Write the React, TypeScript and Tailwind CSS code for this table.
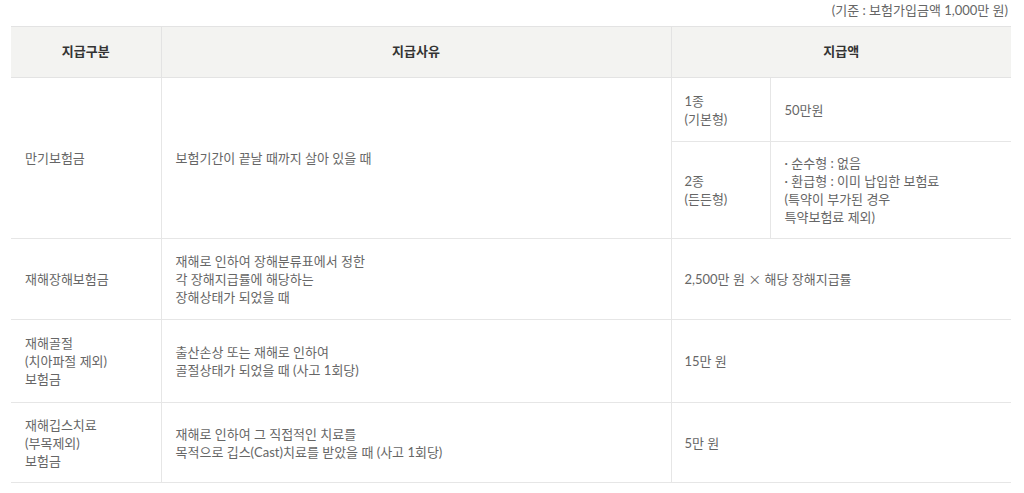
import React from "react";

const font = { fontFamily: "Lato, 'Noto Sans CJK KR', sans-serif" };

export default function App() {
  const td = "border-b border-[#e6e6e6] align-middle text-[13px] leading-[18px] text-[#666]";
  return (
    <div className="min-h-screen bg-white" style={font}>
      <div className="ml-[11px] w-[1000px]">
        <p className="h-[26px] pr-[3px] pt-[1px] text-right text-[13px] leading-[18px] text-[#666]">
          (기준 : 보험가입금액 1,000만 원)
        </p>
        <table className="w-[1000px] table-fixed border-collapse">
          <colgroup>
            <col className="w-[150px]" />
            <col className="w-[510px]" />
            <col className="w-[99px]" />
            <col className="w-[241px]" />
          </colgroup>
          <thead>
            <tr className="h-[51px] bg-[#f3f3f1]">
              <th className="border-t border-b border-[#e3e3e3] text-[13px] font-bold text-[#333]">지급구분</th>
              <th className="border-t border-b border-l border-[#e3e3e3] text-[13px] font-bold text-[#333]">지급사유</th>
              <th colSpan={2} className="border-t border-b border-l border-[#e3e3e3] text-[13px] font-bold text-[#333]">지급액</th>
            </tr>
          </thead>
          <tbody>
            <tr className="h-[64px]">
              <td rowSpan={2} className={`${td} pl-[14px]`}>만기보험금</td>
              <td rowSpan={2} className={`${td} border-l pl-[14px]`}>보험기간이 끝날 때까지 살아 있을 때</td>
              <td className={`${td} border-l pl-[13px]`}>1종<br />(기본형)</td>
              <td className={`${td} border-l pl-[14px]`}>50만원</td>
            </tr>
            <tr className="h-[97px]">
              <td className={`${td} border-l pl-[13px]`}>2종<br />(든든형)</td>
              <td className={`${td} border-l pl-[14px]`}>
                · 순수형 : 없음<br />
                · 환급형 : 이미 납입한 보험료<br />
                (특약이 부가된 경우<br />
                특약보험료 제외)
              </td>
            </tr>
            <tr className="h-[81px]">
              <td className={`${td} pl-[14px]`}>재해장해보험금</td>
              <td className={`${td} border-l pl-[14px]`}>
                재해로 인하여 장해분류표에서 정한<br />
                각 장해지급률에 해당하는<br />
                장해상태가 되었을 때
              </td>
              <td colSpan={2} className={`${td} border-l pl-[13px]`}>
                2,500만 원 <span className="font-['Noto_Sans_CJK_KR']">×</span> 해당 장해지급률
              </td>
            </tr>
            <tr className="h-[83px]">
              <td className={`${td} pl-[14px]`}>재해골절<br />(치아파절 제외)<br />보험금</td>
              <td className={`${td} border-l pl-[14px]`}>
                출산손상 또는 재해로 인하여<br />
                골절상태가 되었을 때 (사고 1회당)
              </td>
              <td colSpan={2} className={`${td} border-l pl-[13px]`}>15만 원</td>
            </tr>
            <tr className="h-[80px]">
              <td className={`${td} pl-[14px]`}>재해깁스치료<br />(부목제외)<br />보험금</td>
              <td className={`${td} border-l pl-[14px]`}>
                재해로 인하여 그 직접적인 치료를<br />
                목적으로 깁스(Cast)치료를 받았을 때 (사고 1회당)
              </td>
              <td colSpan={2} className={`${td} border-l pl-[13px]`}>5만 원</td>
            </tr>
          </tbody>
        </table>
      </div>
    </div>
  );
}
